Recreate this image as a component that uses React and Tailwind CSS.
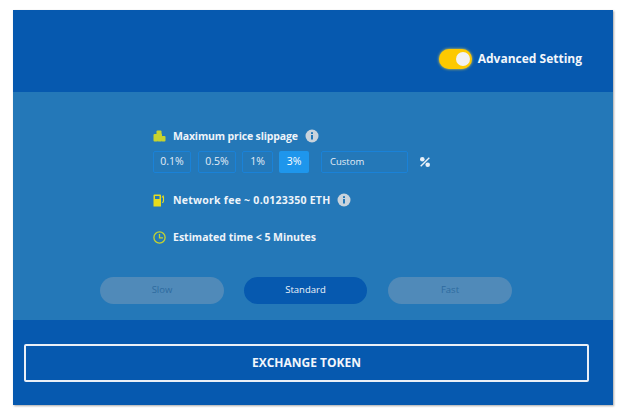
const FONT = "font-['Open_Sans',sans-serif]"
const SLIPPAGE = [
  { label: '0.1%', width: 'w-[38px] mr-[7px]' },
  { label: '0.5%', width: 'w-[38px] mr-[6px]' },
  { label: '1%', width: 'w-[31px] mr-[6px]' },
]

function InfoDot() {
  return (
    <svg width="14" height="14" viewBox="0 0 14 14" className="shrink-0">
      <circle cx="7" cy="7" r="6.5" fill="#c9d3dc" />
      <rect x="6" y="6" width="2" height="4.5" fill="#2478b8" />
      <rect x="6" y="3.2" width="2" height="1.8" fill="#2478b8" />
    </svg>
  )
}

function PercentIcon() {
  return (
    <svg width="10" height="10" viewBox="0 0 10 10" fill="#e8f0f8" className="ml-[12px] shrink-0">
      <circle cx="2.3" cy="2.3" r="2.3" />
      <circle cx="7.7" cy="7.7" r="2.3" />
      <path d="M8.8 0.2 L9.8 1.2 L1.2 9.8 L0.2 8.8 Z" />
    </svg>
  )
}

function CoinsIcon() {
  return (
    <svg width="13" height="12" viewBox="0 0 13 12" fill="#c6d32f" className="shrink-0">
      <rect x="3.5" y="0.5" width="5" height="4.5" rx="1" />
      <rect x="0.5" y="4" width="4.5" height="7.5" rx="1" />
      <rect x="4.5" y="3.5" width="4.5" height="8" rx="1" />
      <rect x="8.5" y="6" width="4" height="5.5" rx="1" />
    </svg>
  )
}

function FuelIcon() {
  return (
    <svg width="12" height="13" viewBox="0 0 12 13" className="shrink-0">
      <path d="M0.5 1.5A1 1 0 0 1 1.5 .5H7A1 1 0 0 1 8 1.5V12.5H.5Z" fill="#e6dc1e" />
      <rect x="2" y="2" width="4.5" height="3" fill="#2478b8" />
      <path d="M9 3.5 L10.5 1.5 M10.5 2.5 V7 Q10.5 8.5 9 8.5" stroke="#e6dc1e" strokeWidth="1.1" fill="none" />
    </svg>
  )
}

function ClockIcon() {
  return (
    <svg width="13" height="13" viewBox="0 0 13 13" fill="none" stroke="#c6d32f" strokeWidth="1.3" className="shrink-0">
      <circle cx="6.5" cy="6.5" r="5.6" />
      <path d="M6.5 3V6.8H10" />
    </svg>
  )
}

function Row({ icon, children }) {
  return (
    <div className="flex items-center text-[10.5px] font-bold text-[#eef4fa] leading-[14px]">
      <span className="w-5 flex shrink-0">{icon}</span>
      {children}
    </div>
  )
}

export default function App() {
  return (
    <div className={`w-[626px] h-[409px] bg-white pt-[10px] pl-[13px] ${FONT}`}>
      <div className="w-[600px] h-[395px] flex flex-col bg-[#0659af] shadow-[1px_1px_2px_rgba(0,0,0,0.35)]">
        {/* Header */}
        <div className="h-[82px] shrink-0 flex items-center justify-end gap-[6px] pr-[31px] pt-[15px]">
          <div className="w-[33px] h-[20px] rounded-full bg-[#fdc900] shadow-[0_0_3px_#f5d63d] flex items-center justify-end pr-[2px]">
            <div className="w-[14px] h-[14px] rounded-full bg-[#f1f1f1]" />
          </div>
          <span className="text-[12px] font-bold text-[#f2f6fb]">Advanced Setting</span>
        </div>

        {/* Settings */}
        <div className="h-[228px] shrink-0 bg-[#2478b8] flex flex-col pt-[37px]">
          <div className="pl-[140px]">
            <Row icon={<CoinsIcon />}>
              <span className="tracking-[-0.15px]">Maximum price slippage</span>
              <span className="ml-[7px]"><InfoDot /></span>
            </Row>
            <div className="flex items-center mt-[8px] text-[10.5px] text-[#e4eef7]">
              {SLIPPAGE.map((s) => (
                <div
                  key={s.label}
                  className={`h-[22px] flex items-center justify-center rounded-[2px] border border-[#1a82d8] ${s.width}`}
                >
                  {s.label}
                </div>
              ))}
              <div className="h-[22px] w-[30px] flex items-center justify-center rounded-[2px] bg-[#1e96ec] text-white">
                3%
              </div>
              <div className="h-[22px] w-[87px] ml-[12px] pl-[8px] flex items-center rounded-[2px] border border-[#1a82d8] text-[9.5px]">
                Custom
              </div>
              <PercentIcon />
            </div>
            <div className="mt-[20px]">
              <Row icon={<FuelIcon />}>
                <span className="tracking-[0.26px]">Network fee ~ 0.0123350 ETH</span>
                <span className="ml-[6px]"><InfoDot /></span>
              </Row>
            </div>
            <div className="mt-[23px]">
              <Row icon={<ClockIcon />}>
                <span>Estimated time &lt; 5 Minutes</span>
              </Row>
            </div>
          </div>

          <div className="flex gap-[20px] ml-[87px] mt-[33px] text-[9.5px]">
            <div className="w-[124px] h-[27px] rounded-full bg-[#508ab9] text-[#2e6b9f] flex items-center justify-center">Slow</div>
            <div className="w-[123px] h-[27px] rounded-full bg-[#0659af] text-[#eef4fa] flex items-center justify-center">Standard</div>
            <div className="w-[124px] h-[27px] ml-px rounded-full bg-[#508ab9] text-[#2e6b9f] flex items-center justify-center">Fast</div>
          </div>
        </div>

        {/* Footer */}
        <div className="flex-1 pt-[24px] pl-[11px]">
          <button className="w-[565px] h-[38px] border-2 border-[#eaf0f7] rounded-[2px] text-[12px] font-bold text-[#f2f6fb]">
            EXCHANGE TOKEN
          </button>
        </div>
      </div>
    </div>
  )
}
